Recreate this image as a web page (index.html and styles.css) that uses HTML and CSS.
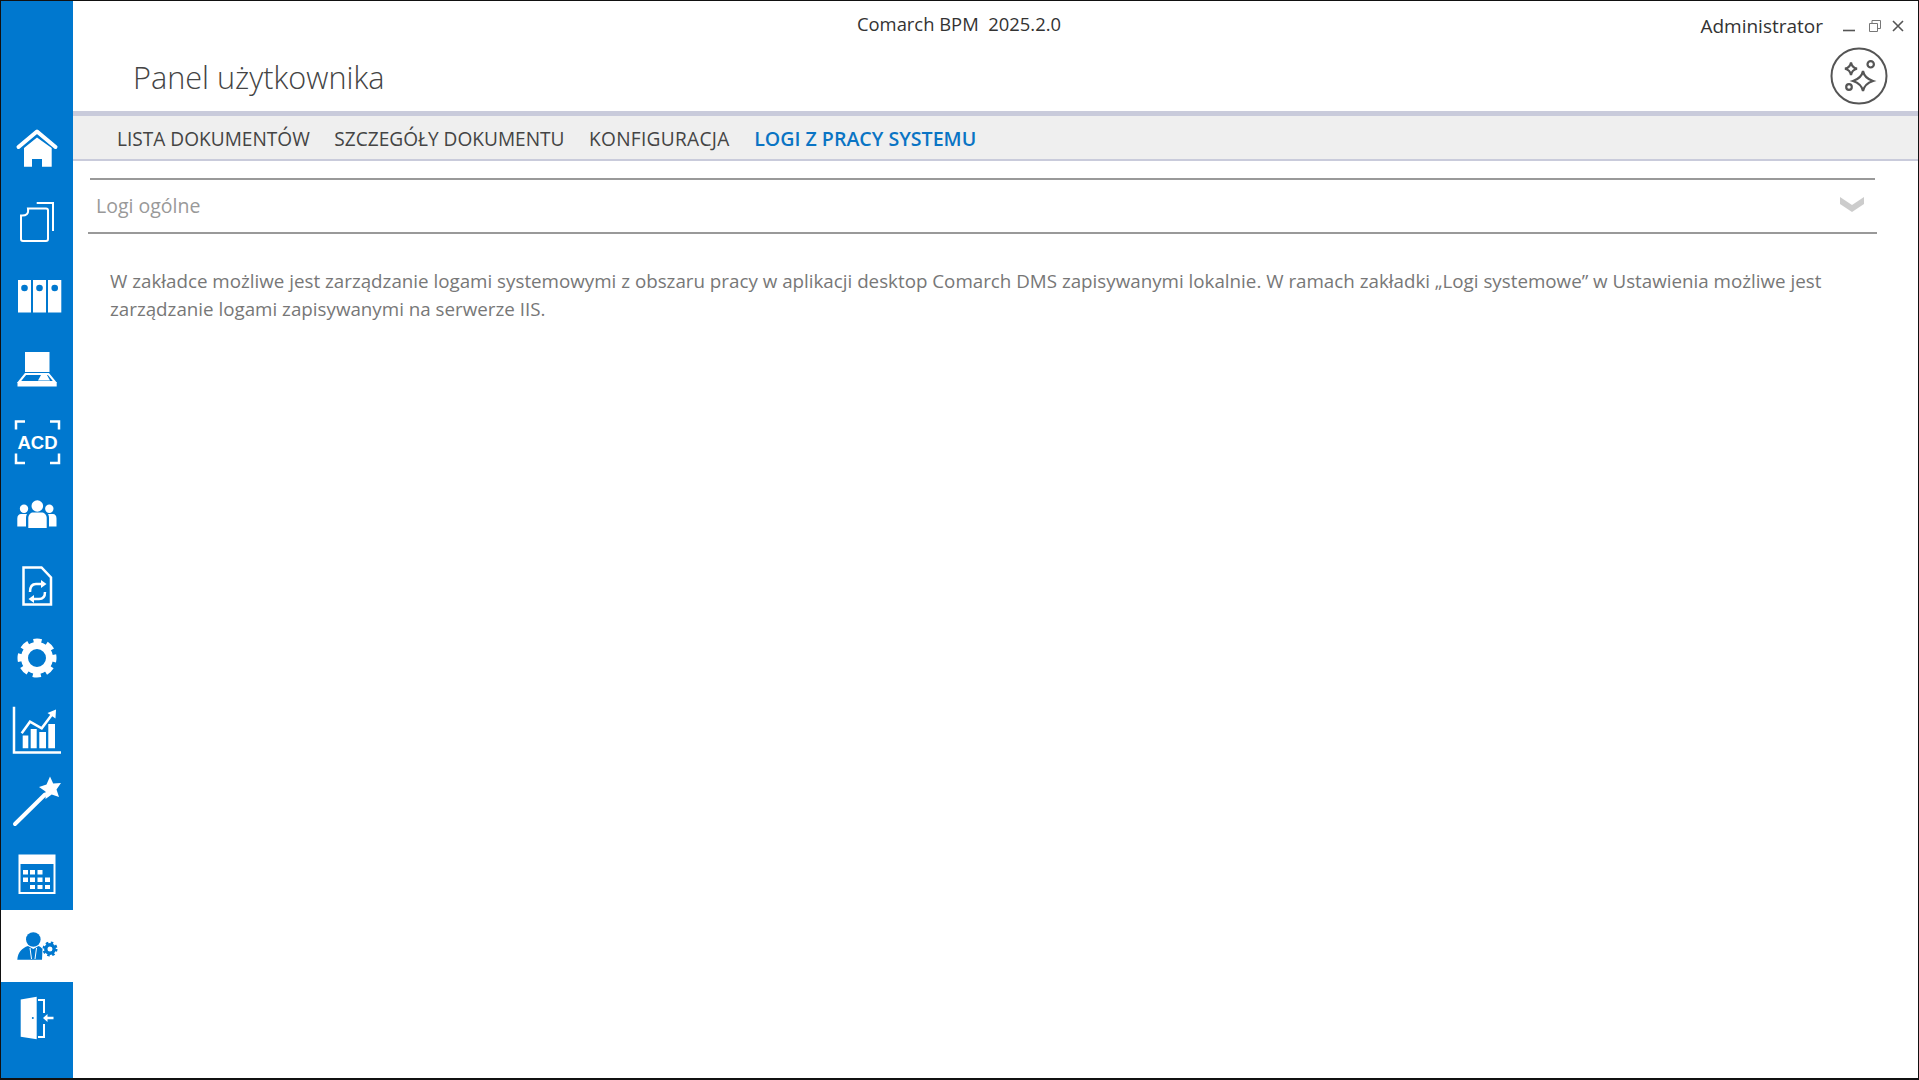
FILE: index.html
```html
<!DOCTYPE html>
<html lang="pl">
<head>
<meta charset="utf-8">
<title>Comarch BPM</title>
<link rel="stylesheet" href="styles.css">
</head>
<body>
<div class="window">
  <nav class="sidebar">
    <a class="nav-item nav-item-tall"><svg class="nav-icon" viewBox="0 0 56 56"><path class="line" d="M9.5 27 28 11.5 46.5 27"/><path class="fill" d="M15 46.700V28L28 17.500 42.700 28V46.700H33V39H23V46.700Z"/></svg></a>
    <a class="nav-item nav-item-tall"><svg class="nav-icon" viewBox="0 0 56 56"><path class="thin" d="M27.700 9H44V37"/><path class="thin" d="M19 14.500H37A2 2 0 0 1 39 16.500V45A2 2 0 0 1 37 47H14A2 2 0 0 1 12 45V21.500C17 22 20 20 19 14.500Z"/></svg></a>
    <a class="nav-item nav-item-tall"><svg class="nav-icon" viewBox="0 0 56 56"><path class="fill" d="M9 12H22V44.500H9ZM24 12H37V44.500H24ZM39 12H52.300V44.500H39Z"/><circle class="hole" cx="15.500" cy="20" r="3.300"/><circle class="hole" cx="30.500" cy="20" r="3.300"/><circle class="hole" cx="45.700" cy="20" r="3.300"/></svg></a>
    <a class="nav-item nav-item-tall"><svg class="nav-icon" viewBox="0 0 56 56"><path class="fill" d="M16 11H40.500V31H16Z"/><path class="thin" d="M16.500 33 10 41H46L39.500 33Z"/><path class="fill" d="M32 34H38L41 39.500H29Z"/><path class="fill" d="M8.500 41.500H47.700V45.500H8.500Z"/></svg></a>
    <a class="nav-item"><svg class="nav-icon" viewBox="0 0 56 56"><path class="thick" d="M7 15.500V7.500H16M41 7.500H50V15.500M7 39.500V49H16M41 49H50V39.500"/><text class="acd" x="28.500" y="34.500">ACD</text></svg></a>
    <a class="nav-item"><svg class="nav-icon" viewBox="0 0 56 56"><circle class="fill" cx="28.300" cy="20" r="5.800"/><circle class="fill" cx="15" cy="22.700" r="4.200"/><circle class="fill" cx="40.300" cy="22.700" r="4.200"/><path class="fill" d="M19.300 42V32C19.300 28.500 22 26.500 24 26.500H32.500C35 26.500 37.700 28.500 37.700 32V42Z"/><path class="fill" d="M8.300 40.500V32.500C8.300 29.500 10 28 12 28H18C17 30 17 31 17 33V40.500ZM47.500 40.500V32.500C47.500 29.500 46 28 44 28H39C40 30 40 31 40 33V40.500Z"/></svg></a>
    <a class="nav-item"><svg class="nav-icon" viewBox="0 0 56 56"><path class="thick" d="M14.500 9.500H32.500L42 19.500V46.500H14.500Z"/><path class="thick" d="M21 34C21 28 23 26 27 26H33M36 34C36 38 34 41 30 41H24"/><path class="fill" d="M32 22 37.500 26 32 30ZM25 37 19.500 41 25 45Z"/></svg></a>
    <a class="nav-item"><svg class="nav-icon" viewBox="0 0 56 56"><circle class="gear-body" cx="28" cy="28" r="12.500"/><circle class="gear-teeth" cx="28" cy="28" r="17"/></svg></a>
    <a class="nav-item"><svg class="nav-icon" viewBox="0 0 56 56"><path class="thick" d="M5 4.700V50.500H52"/><path class="fill" d="M13.700 33.500H19.300V46.300H13.700ZM21.700 27H27.700V46.300H21.700ZM30.300 30H37V46.300H30.300ZM39.300 22H46V46.300H39.300Z"/><path class="thick" d="M12.700 31.300 21 19.700 32.700 26.300 43 12.500"/><path class="fill" d="M38.500 11 47 7.500 46.500 16.500Z"/></svg></a>
    <a class="nav-item"><svg class="nav-icon" viewBox="0 0 56 56"><path class="line" d="M6 50 36 20.500"/><path class="fill" d="M41 2.500 44.200 9.500 52 9 47.500 15.500 50 23 42.700 20.500 36.500 25 36.500 17.500 30 13 37.500 10.500Z"/></svg></a>
    <a class="nav-item"><svg class="nav-icon" viewBox="0 0 56 56"><path class="thin" d="M10.500 9.500H45.500V47H10.500Z"/><path class="fill" d="M10 9H46V18H10ZM14 24H19V28.500H14ZM21 24H26V28.500H21ZM28.500 24H33.500V28.500H28.500ZM14 31.500H19V36H14ZM21 31.500H26V36H21ZM28.500 31.500H33.500V36H28.500ZM36 31.500H41V36H36ZM21 39H26V43H21ZM28.500 39H33.500V43H28.500ZM36 39H41V43H36Z"/></svg></a>
    <a class="nav-item nav-item-active"><svg class="nav-icon" viewBox="0 0 56 56"><circle class="blue" cx="24.300" cy="21.500" r="7.300"/><path class="blue" d="M8.300 41.700C9 34 13 30 19 28L24.300 31 29.500 28C31 28.500 32.700 30 33.500 31L33 41.700Z"/><path class="tie" d="M21 30 22.500 41M27.500 30 26 41"/><circle class="small-gear" cx="41" cy="31" r="4.200"/><circle class="small-teeth" cx="41" cy="31" r="6.300"/></svg></a>
    <a class="nav-item"><svg class="nav-icon" viewBox="0 0 56 56"><path class="thin" d="M29 10H35V23M35 34V47H29"/><path class="fill" d="M11.700 9.500 27.700 6.700V49.300L11.700 46.700Z"/><circle class="hole" cx="23.800" cy="28" r="1"/><path class="fill" d="M34 28 38.500 24V26.700H44.500V29.300H38.500V32Z"/></svg></a>
  </nav>
  <main class="main">
    <header class="topbar">
      <div class="app-title">Comarch BPM&nbsp; 2025.2.0</div>
      <div class="top-right">
        <span class="user">Administrator</span>
        <div class="win-controls">
          <svg class="win-icon win-minimize" viewBox="0 0 12 12"><path class="win-line-thick" d="M0 10.500H12"/></svg>
          <svg class="win-icon" viewBox="0 0 12 12"><path class="win-line" d="M.5 3.500H8.500V11.500H.5ZM3 3V.5H11.500V8.500H9"/></svg>
          <svg class="win-icon" viewBox="0 0 12 12"><path class="win-line-thick" d="M1 1 11 11M11 1 1 11"/></svg>
        </div>
      </div>
    </header>
    <section class="page-head">
      <h1 class="page-title">Panel użytkownika</h1>
      <button class="ai-button" type="button"><svg class="ai-icon" viewBox="0 0 58 58"><circle class="ai-ring" cx="29" cy="29" r="27.500"/><path class="ai-stroke" d="M33 24C34 29 37 32 43 34C37 36 34 39 33 44C32 39 29 36 23 34C29 32 32 29 33 24Z"/><path class="ai-stroke" d="M21 15.500C21.500 18.500 23.500 21 27 21.700C23.500 22.500 21.500 25 21 28C20.500 25 18.500 22.500 15 21.700C18.500 21 20.500 18.500 21 15.500Z"/><circle class="ai-stroke" cx="40.700" cy="17.300" r="3.200"/><circle class="ai-stroke" cx="19" cy="40" r="2.800"/></svg></button>
    </section>
    <div class="tabs">
      <a class="tab">LISTA DOKUMENTÓW</a>
      <a class="tab">SZCZEGÓŁY DOKUMENTU</a>
      <a class="tab tab-wide">KONFIGURACJA</a>
      <a class="tab tab-active">LOGI Z PRACY SYSTEMU</a>
    </div>
    <section class="content">
      <div class="accordion">
        <span class="accordion-title">Logi ogólne</span>
        <svg class="chevron" viewBox="0 0 24 16"><path d="M0 1 12 9 24 1V8L12 16 0 8Z"/></svg>
      </div>
      <p class="description">W zakładce możliwe jest zarządzanie logami systemowymi z obszaru pracy w aplikacji desktop Comarch DMS zapisywanymi lokalnie. W ramach zakładki „Logi systemowe” w Ustawienia możliwe jest<br>zarządzanie logami zapisywanymi na serwerze IIS.</p>
    </section>
  </main>
</div>
</body>
</html>
```
FILE: styles.css
```css
* { box-sizing: border-box; }
html, body { margin: 0; padding: 0; height: 100%; background: #fff; overflow: hidden; }
body { font-family: "Open Sans", "Noto Sans", sans-serif; color: #333; }
.window { display: flex; height: 1080px; width: 1919px; border: 1px solid #111; border-bottom-width: 2px; }
.sidebar { width: 72px; flex: none; background: #0078cf; padding-top: 110.6px; display: flex; flex-direction: column; }
.nav-item { height: 72px; flex: none; display: flex; align-items: center; justify-content: center; }
.nav-item-tall { height: 73.6px; }
.nav-item-active { background: #fff; }
.nav-icon { width: 56px; height: 56px; }
.fill { fill: #fff; }
.line { fill: none; stroke: #fff; stroke-width: 4; stroke-linecap: round; stroke-linejoin: round; }
.thin { fill: none; stroke: #fff; stroke-width: 2; }
.thick { fill: none; stroke: #fff; stroke-width: 2.500; }
.hole { fill: #0078cf; }
.acd { fill: #fff; font-family: "Liberation Sans", sans-serif; font-weight: 700; font-size: 18.500px; text-anchor: middle; }
.gear-body { fill: none; stroke: #fff; stroke-width: 7; }
.gear-teeth { fill: none; stroke: #fff; stroke-width: 5; stroke-dasharray: 8 5.350; stroke-dashoffset: 4; }
.blue { fill: #0078cf; }
.tie { fill: none; stroke: #fff; stroke-width: 1; }
.small-gear { fill: none; stroke: #0078cf; stroke-width: 3.400; }
.small-teeth { fill: none; stroke: #0078cf; stroke-width: 2.400; stroke-dasharray: 2.500 2.450; }
.main { flex: 1; min-width: 0; display: flex; flex-direction: column; }
.topbar { height: 41px; flex: none; display: flex; position: relative; justify-content: center; padding-right: 73px; }
.app-title { font-size: 18.400px; line-height: 20px; padding-top: 13px; color: #333; }
.top-right { position: absolute; right: 0; top: 0; display: flex; align-items: flex-start; }
.user { font-size: 19px; line-height: 26px; padding-top: 12px; color: #333; }
.win-controls { display: flex; gap: 11px; padding: 19px 14px 0 20px; }
.win-minimize { margin-right: 3px; }
.win-icon { width: 12px; height: 12px; }
.win-line { fill: none; stroke: #777; stroke-width: 1; }
.win-line-thick { fill: none; stroke: #555; stroke-width: 1.600; }
.page-head { height: 69px; flex: none; display: flex; justify-content: space-between; align-items: flex-start; padding: 14px 30px 0 60px; }
.page-title { margin: 0; font-size: 30.650px; font-weight: 300; line-height: 42px; color: #444; }
.ai-button { padding: 0; border: 0; background: none; width: 58px; height: 58px; margin-top: -9px; }
.ai-icon { display: block; width: 58px; height: 58px; }
.ai-ring { fill: none; stroke: #555; stroke-width: 2; }
.ai-stroke { fill: none; stroke: #555; stroke-width: 2.200; }
.tabs { height: 50px; flex: none; background: #efefef; border-top: 5px solid #c9cbdb; border-bottom: 2px solid #c9cbdb; display: flex; align-items: baseline; gap: 24.500px; padding: 9px 0 0 44px; }
.tab { font-size: 19.100px; color: #444; white-space: nowrap; }
.tab-wide { letter-spacing: .3px; }
.tab-active { color: #0a74c4; font-size: 19.600px; font-weight: 600; }
.content { flex: 1; }
.accordion { margin: 17px 43px 0 17px; height: 56px; border-top: 2px solid #999; display: flex; align-items: center; justify-content: space-between; padding: 0 11px 4px 6px; position: relative; }
.accordion::after { content: ""; position: absolute; left: -2px; right: -2px; bottom: 0; height: 2px; background: #999; }
.accordion-title { font-size: 19.500px; color: #999; }
.chevron { width: 24px; height: 16px; fill: #ccc; margin-top: -3px; }
.description { margin: 33px 0 0 37px; font-size: 18.780px; line-height: 28px; color: #777; white-space: nowrap; }
```
